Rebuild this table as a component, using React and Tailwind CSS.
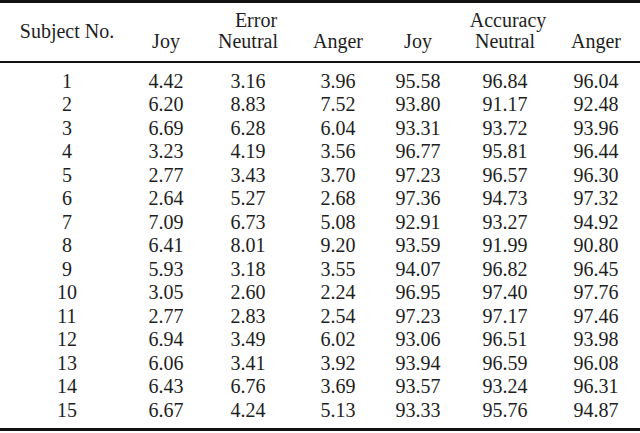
const rows = [
  [1, "4.42", "3.16", "3.96", "95.58", "96.84", "96.04"],
  [2, "6.20", "8.83", "7.52", "93.80", "91.17", "92.48"],
  [3, "6.69", "6.28", "6.04", "93.31", "93.72", "93.96"],
  [4, "3.23", "4.19", "3.56", "96.77", "95.81", "96.44"],
  [5, "2.77", "3.43", "3.70", "97.23", "96.57", "96.30"],
  [6, "2.64", "5.27", "2.68", "97.36", "94.73", "97.32"],
  [7, "7.09", "6.73", "5.08", "92.91", "93.27", "94.92"],
  [8, "6.41", "8.01", "9.20", "93.59", "91.99", "90.80"],
  [9, "5.93", "3.18", "3.55", "94.07", "96.82", "96.45"],
  [10, "3.05", "2.60", "2.24", "96.95", "97.40", "97.76"],
  [11, "2.77", "2.83", "2.54", "97.23", "97.17", "97.46"],
  [12, "6.94", "3.49", "6.02", "93.06", "96.51", "93.98"],
  [13, "6.06", "3.41", "3.92", "93.94", "96.59", "96.08"],
  [14, "6.43", "6.76", "3.69", "93.57", "93.24", "96.31"],
  [15, "6.67", "4.24", "5.13", "93.33", "95.76", "94.87"],
];

const cols = "grid grid-cols-[118px_80px_84px_96px_64px_110px_72px] pl-[8px]";
const cell = "flex justify-center whitespace-nowrap";

export default function App() {
  return (
    <div className="w-[640px] h-[433px] bg-white text-[#1e1e1e] text-[20px] overflow-hidden font-['Liberation_Serif','Times_New_Roman',serif]">
      {/* top rule */}
      <div className="border-t-[3px] border-[#111]" />

      {/* HEADER */}
      <div className={`${cols} grid-rows-[21px_21px] leading-[21px] pt-[7px] pb-[9px]`}>
        <div className={`${cell} row-span-2 items-center`}>Subject No.</div>
        <div />
        <div className={`${cell} pl-[16px]`}>Error</div>
        <div />
        <div />
        <div className={`${cell} pl-[6px]`}>Accuracy</div>
        <div />
        <div className={cell}>Joy</div>
        <div className={cell}>Neutral</div>
        <div className={cell}>Anger</div>
        <div className={cell}>Joy</div>
        <div className={cell}>Neutral</div>
        <div className={cell}>Anger</div>
      </div>

      <div className="border-t-2 border-[#111]" />

      {/* BODY */}
      <div className="pt-[6.5px] pb-[6px] leading-[23.5px]">
        {rows.map((r) => (
          <div key={r[0]} className={`${cols} h-[23.5px]`}>
            {r.map((v, i) => (
              <div key={i} className={cell}>
                {v}
              </div>
            ))}
          </div>
        ))}
      </div>

      <div className="border-t-[3px] border-[#111]" />
    </div>
  );
}
